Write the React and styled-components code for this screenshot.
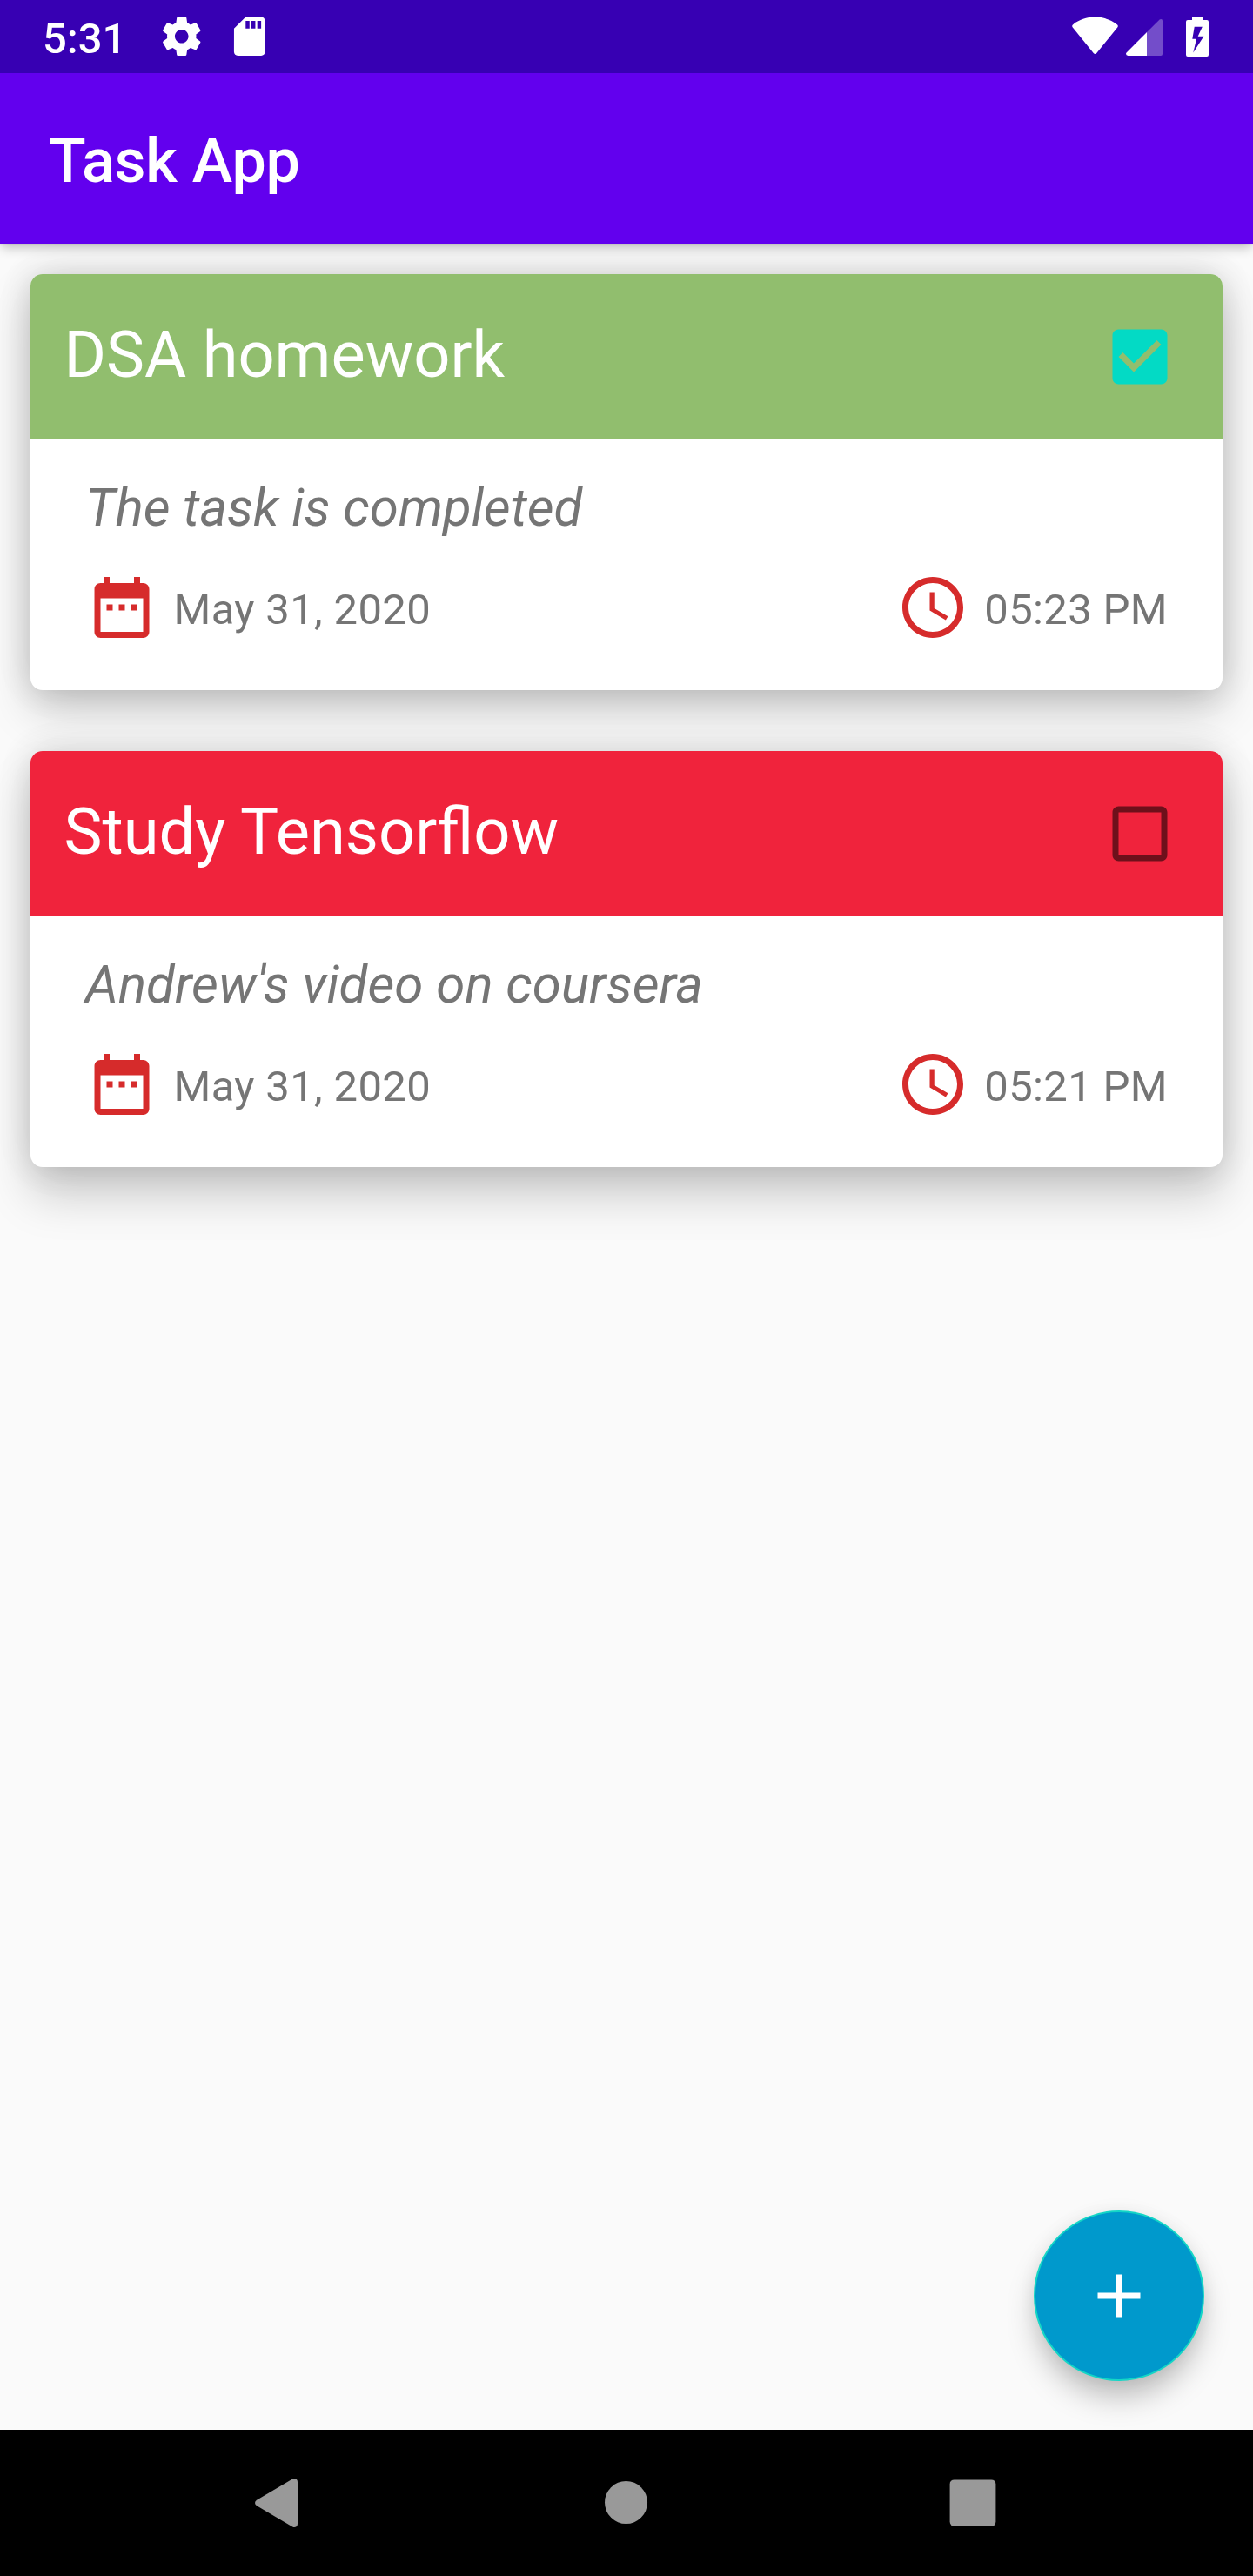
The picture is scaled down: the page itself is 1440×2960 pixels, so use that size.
import React from 'react';
import styled, { createGlobalStyle } from 'styled-components';

const GlobalStyle = createGlobalStyle`
  * {
    box-sizing: border-box;
  }
  body {
    margin: 0;
    background: #fafafa;
    font-family: Roboto, 'Liberation Sans', sans-serif;
  }
`;

const Screen = styled.div`
  width: 1440px;
  height: 2960px;
  display: flex;
  flex-direction: column;
  overflow: hidden;
  background: #fafafa;
`;

const StatusBar = styled.header`
  position: relative;
  z-index: 2;
  flex: none;
  height: 84px;
  padding: 0 51px 0 49px;
  display: flex;
  align-items: center;
  justify-content: space-between;
  background: #3700b3;
  color: #fff;
`;

const StatusGroup = styled.div`
  display: flex;
  align-items: center;
`;

const Clock = styled.span`
  padding-top: 5px;
  margin-right: 37px;
  font-size: 49px;
  line-height: 57px;
  font-weight: 500;
`;

const StatusIcon = styled.svg`
  display: block;
  flex: none;
  width: ${(p) => p.$w}px;
  height: ${(p) => p.$h}px;
  margin-right: ${(p) => p.$gap || 0}px;
  fill: currentColor;
`;

const AppBar = styled.div`
  position: relative;
  z-index: 1;
  flex: none;
  height: 196px;
  padding: 60px 56px 0;
  background: #6200ee;
  box-shadow: 0 7px 12px -2px rgba(0, 0, 0, 0.22), 0 0 5px rgba(0, 0, 0, 0.1);
`;

const AppTitle = styled.h1`
  margin: 0;
  color: #fff;
  font-size: 70px;
  line-height: 82px;
  font-weight: 500;
  letter-spacing: -0.2px;
`;

const Content = styled.main`
  flex: 1;
  min-height: 0;
  padding: 35px 35px 56px;
  display: flex;
  flex-direction: column;
`;

const TaskList = styled.div`
  display: flex;
  flex-direction: column;
  gap: 70px;
`;

const Card = styled.article`
  height: 478px;
  border-radius: 14px;
  background: #fff;
  box-shadow: 0 ${(p) => p.$drop}px 52px rgba(0, 0, 0, 0.175),
    0 0 36px rgba(0, 0, 0, 0.14), 0 0 70px rgba(0, 0, 0, 0.03);
`;

const CardHeader = styled.div`
  height: 190px;
  padding: 0 53px 0 38.5px;
  display: flex;
  justify-content: space-between;
  align-items: flex-start;
  border-radius: 14px 14px 0 0;
  background: ${(p) => (p.$done ? '#91be6e' : '#f0233c')};
`;

const CardTitle = styled.h2`
  margin: 49px 0 0;
  color: #fff;
  font-size: 74px;
  line-height: 87px;
  font-weight: 400;
`;

const Checkbox = styled.svg`
  display: block;
  width: 84px;
  height: 84px;
  margin-top: 53px;
  fill: ${(p) => (p.$done ? '#03dac5' : 'rgba(0, 0, 0, 0.54)')};
`;

const CardBody = styled.div`
  padding: 43px 63px 0;
  color: #757575;
`;

const Description = styled.p`
  margin: 0;
  font-size: 60px;
  line-height: 71px;
  font-style: italic;
`;

const MetaRow = styled.div`
  margin-top: 37px;
  display: flex;
  justify-content: space-between;
`;

const Meta = styled.div`
  display: flex;
  align-items: flex-start;
  gap: 17.5px;
`;

const MetaIcon = styled.svg`
  display: block;
  width: 84px;
  height: 84px;
  fill: #d62b2b;
`;

const MetaText = styled.span`
  margin-top: 16px;
  font-size: 49px;
  line-height: 57px;
  letter-spacing: 0.35px;
`;

const Fab = styled.button`
  width: 196px;
  height: 196px;
  margin: auto 21px 0 0;
  padding: 0;
  align-self: flex-end;
  display: flex;
  align-items: center;
  justify-content: center;
  border: 2px solid #14d6c6;
  border-radius: 50%;
  background: #0099cc;
  box-shadow: 0 22px 34px -4px rgba(0, 0, 0, 0.25), 0 0 20px rgba(0, 0, 0, 0.06);
`;

const FabIcon = styled.svg`
  width: 84px;
  height: 84px;
  fill: #fff;
`;

const NavBar = styled.nav`
  position: relative;
  flex: none;
  height: 168px;
  display: flex;
  align-items: center;
  justify-content: center;
  gap: 314px;
  background: #000;
`;

const NavIcon = styled.svg`
  display: block;
  width: 84px;
  height: 84px;
  fill: #999;
`;

const tasks = [
  { title: 'DSA homework', note: 'The task is completed', date: 'May 31, 2020', time: '05:23 PM', done: true, drop: 24 },
  { title: 'Study Tensorflow', note: "Andrew's video on coursera", date: 'May 31, 2020', time: '05:21 PM', done: false, drop: 34 },
];

const CHECKED =
  'M19 3H5c-1.11 0-2 .9-2 2v14c0 1.1.89 2 2 2h14c1.11 0 2-.9 2-2V5c0-1.1-.89-2-2-2zm-9 14l-5-5 1.41-1.41L10 14.17l7.59-7.59L19 8l-9 9z';
const UNCHECKED =
  'M19 5v14H5V5h14m0-2H5c-1.1 0-2 .9-2 2v14c0 1.1.9 2 2 2h14c1.1 0 2-.9 2-2V5c0-1.1-.9-2-2-2z';

function TaskCard({ task }) {
  return (
    <Card $drop={task.drop}>
      <CardHeader $done={task.done}>
        <CardTitle>{task.title}</CardTitle>
        <Checkbox viewBox="0 0 24 24" $done={task.done}>
          <path d={task.done ? CHECKED : UNCHECKED} />
        </Checkbox>
      </CardHeader>
      <CardBody>
        <Description>{task.note}</Description>
        <MetaRow>
          <Meta>
            <MetaIcon viewBox="0 0 24 24">
              <path d="M9 11H7v2h2v-2zm4 0h-2v2h2v-2zm4 0h-2v2h2v-2zm2-7h-1V2h-2v2H8V2H6v2H5c-1.11 0-1.99.9-1.99 2L3 20c0 1.1.89 2 2 2h14c1.1 0 2-.9 2-2V6c0-1.1-.9-2-2-2zm0 16H5V9h14v11z" />
            </MetaIcon>
            <MetaText>{task.date}</MetaText>
          </Meta>
          <Meta>
            <MetaIcon viewBox="0 0 24 24">
              <path d="M11.99 2C6.47 2 2 6.48 2 12s4.47 10 9.99 10C17.52 22 22 17.52 22 12S17.52 2 11.99 2zM12 20c-4.42 0-8-3.58-8-8s3.58-8 8-8 8 3.58 8 8-3.58 8-8 8z" />
              <path d="M12.5 7H11v6l5.25 3.15.75-1.23-4.5-2.67z" />
            </MetaIcon>
            <MetaText>{task.time}</MetaText>
          </Meta>
        </MetaRow>
      </CardBody>
    </Card>
  );
}

export default function App() {
  return (
    <Screen>
      <GlobalStyle />
      <StatusBar>
        <StatusGroup>
          <Clock>5:31</Clock>
          <StatusIcon viewBox="0 0 24 24" $w={53.5} $h={53.5} $gap={24}>
            <path d="M19.43 12.98c.04-.32.07-.64.07-.98s-.03-.66-.07-.98l2.11-1.65c.19-.15.24-.42.12-.64l-2-3.46c-.12-.22-.39-.3-.61-.22l-2.49 1c-.52-.4-1.08-.73-1.69-.98l-.38-2.65C14.46 2.18 14.25 2 14 2h-4c-.25 0-.46.18-.49.42l-.38 2.65c-.61.25-1.17.59-1.69.98l-2.49-1c-.23-.09-.49 0-.61.22l-2 3.46c-.13.22-.07.49.12.64l2.11 1.65c-.04.32-.07.65-.07.98s.03.66.07.98l-2.11 1.65c-.19.15-.24.42-.12.64l2 3.46c.12.22.39.3.61.22l2.49-1c.52.4 1.08.73 1.69.98l.38 2.65c.03.24.24.42.49.42h4c.25 0 .46-.18.49-.42l.38-2.65c.61-.25 1.17-.59 1.69-.98l2.49 1c.23.09.49 0 .61-.22l2-3.46c.12-.22.07-.49-.12-.64l-2.11-1.65zM12 15.5c-1.93 0-3.5-1.57-3.5-3.5s1.57-3.5 3.5-3.5 3.5 1.57 3.5 3.5-1.57 3.5-3.5 3.5z" />
          </StatusIcon>
          <StatusIcon viewBox="0 0 24 24" $w={53.5} $h={53.5}>
            <path d="M18 2h-8L4.02 8 4 20c0 1.1.9 2 2 2h12c1.1 0 2-.9 2-2V4c0-1.1-.9-2-2-2zm-6 6h-2V4h2v4zm3 0h-2V4h2v4zm3 0h-2V4h2v4z" />
          </StatusIcon>
        </StatusGroup>
        <StatusGroup>
          <StatusIcon viewBox="0 0 53 46" $w={53} $h={46} $gap={9}>
            <path d="M1.2 9.2C8 3.6 17 .6 26.5.6S45 3.6 51.8 9.2Q53.6 10.6 52.2 12.6L28.3 42Q26.5 44 24.7 42L.8 12.6Q-.6 10.6 1.2 9.2z" />
          </StatusIcon>
          <StatusIcon viewBox="0 0 42 46" $w={42} $h={46} $gap={27}>
            <path fillOpacity="0.3" d="M24 18L38.4 3.7Q39.4 2.9 40.4 3Q42 3.2 42 5V43Q42 45 40 45H24z" />
            <path d="M24 18V45H2.4Q0 44.8 0 42.8Q0 41.8 .8 41.2z" />
          </StatusIcon>
          <StatusIcon viewBox="0 0 26 46" $w={26} $h={46}>
            <path
              fillRule="evenodd"
              d="M7 0H19V4H24Q26 4 26 6V44Q26 46 24 46H2Q0 46 0 44V6Q0 4 2 4H7zM9.7 11.7L7.3 25.8H12L8.3 41.5L20.4 22.8H13.7L18.8 11.7z"
            />
          </StatusIcon>
        </StatusGroup>
      </StatusBar>
      <AppBar>
        <AppTitle>Task App</AppTitle>
      </AppBar>
      <Content>
        <TaskList>
          {tasks.map((task) => (
            <TaskCard key={task.title} task={task} />
          ))}
        </TaskList>
        <Fab aria-label="Add task">
          <FabIcon viewBox="0 0 24 24">
            <path d="M19 13h-6v6h-2v-6H5v-2h6V5h2v6h6v2z" />
          </FabIcon>
        </Fab>
      </Content>
      <NavBar>
        <NavIcon viewBox="0 0 84 84">
          <path d="M15 38.8L56.2 14.6Q58.6 13.4 60.6 14.8Q62 15.8 62 18V66Q62 68.2 60.6 69.2Q58.6 70.6 56.2 69.4L15 45.2Q13 44 13 42T15 38.8z" />
        </NavIcon>
        <NavIcon viewBox="0 0 84 84">
          <circle cx="41.5" cy="41.5" r="24.5" />
        </NavIcon>
        <NavIcon viewBox="0 0 84 84">
          <rect x="15.6" y="15.4" width="52.8" height="53.2" rx="5" />
        </NavIcon>
      </NavBar>
    </Screen>
  );
}
